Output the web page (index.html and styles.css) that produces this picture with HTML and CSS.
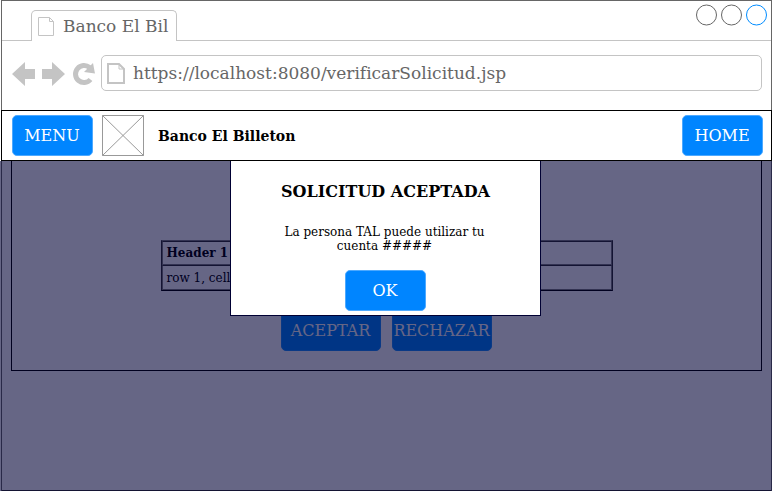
FILE: index.html
```html
<!DOCTYPE html>
<html lang="es">
<head>
<meta charset="utf-8">
<meta name="viewport" content="width=device-width, initial-scale=1">
<title>Banco El Billeton</title>
<link rel="stylesheet" href="styles.css">
</head>
<body>
<div class="window">
  <div class="tabs">
    <div class="tab">
      <svg class="tab-icon" width="16" height="19" viewBox="0 0 16 19" fill="none" stroke="#c4c4c4"><path d="M.5.5h11l4 4v14H.5z"/><path d="M11.500.5v4h4"/></svg>
      <span>Banco El Bil</span>
    </div>
    <svg class="controls" width="71" height="22" viewBox="0 0 71 22" fill="none" stroke="#666"><circle cx="10.500" cy="11" r="10"/><circle cx="35.500" cy="11" r="10"/><circle cx="60.500" cy="11" r="10" stroke="#008cff"/></svg>
  </div>
  <div class="toolbar">
    <svg class="nav-icons" width="84" height="26" viewBox="0 0 84 26"><path fill="#c4c4c4" d="M0 13 13 1v7h10v10H13v7zM53 13 40 1v7H30v10h10v7z"/><path d="M77.500 6.500A8.500 8.500 0 1 0 78.500 18.500" fill="none" stroke="#c4c4c4" stroke-width="5"/><path fill="#c4c4c4" d="M81 2l2 10.500-11-1.500z"/></svg>
    <div class="address">
      <svg width="18" height="21" viewBox="0 0 18 21" fill="none" stroke="#c4c4c4" stroke-width="2"><path d="M1 1h11l5 5v14H1z"/><path stroke-width="1" d="M12 1v5h5"/></svg>
      <input class="url" type="text" aria-label="Dirección" value="https://localhost:8080/verificarSolicitud.jsp">
    </div>
  </div>
  <header class="header">
    <button class="button" type="button">MENU</button>
    <svg class="logo" width="42" height="41" viewBox="0 0 42 41" fill="none" stroke="#999"><path d="M.5.5h41v40H.5zM.5.5l41 40M41.500.5l-41 40"/></svg>
    <h1 class="brand">Banco El Billeton</h1>
    <button class="button" type="button">HOME</button>
  </header>
  <main class="content">
    <section class="panel">
      <table class="grid">
        <tr><th>Header 1</th></tr>
        <tr><td>row 1, cell</td></tr>
      </table>
      <div class="actions">
        <button class="button wide" type="button">ACEPTAR</button>
        <button class="button wide" type="button">RECHAZAR</button>
      </div>
    </section>
    <div class="overlay">
      <div class="dialog" role="dialog" aria-labelledby="dialog-title">
        <h2 class="dialog-title" id="dialog-title">SOLICITUD ACEPTADA</h2>
        <p class="message">La persona TAL puede utilizar tu cuenta #####</p>
        <button class="button" type="button">OK</button>
      </div>
    </div>
  </main>
</div>
</body>
</html>
```
FILE: styles.css
```css
* { box-sizing: border-box; }

body {
  margin: 0;
  background: #fff;
  color: #000;
  font-family: "DejaVu Serif", serif;
}

.window {
  display: flex;
  flex-direction: column;
  min-height: calc(100vh - 1px);
  margin: 0 1px;
  border: 1px solid #666;
  border-bottom: 0;
}

.tabs {
  display: flex;
  justify-content: space-between;
  height: 40px;
  padding: 9px 4px 0 29px;
  border-bottom: 1px solid #c4c4c4;
}

.tab {
  display: flex;
  align-items: center;
  gap: 9px;
  height: 31px;
  padding: 0 8px 0 6px;
  border: 1px solid #c4c4c4;
  border-bottom: 0;
  border-radius: 5px 5px 0 0;
  background: #fff;
  color: #666;
  font-size: 17px;
}

.controls { margin-top: -6px; }

.toolbar {
  display: flex;
  align-items: center;
  gap: 5px;
  height: 69px;
  padding: 0 9px 5px 10px;
}

.nav-icons {
  flex: none;
  margin-top: 2px;
}

.address {
  display: flex;
  flex: 1;
  align-items: center;
  gap: 8px;
  height: 36px;
  padding: 0 5px;
  border: 1px solid #c4c4c4;
  border-radius: 5px;
}

.url {
  flex: 1;
  min-width: 0;
  padding: 0;
  border: 0;
  outline: 0;
  background: transparent;
  color: #666;
  font: 17px "DejaVu Serif", serif;
}

.header {
  display: flex;
  align-items: center;
  height: 51px;
  margin: 0 -1px;
  padding: 0 8px 0 10px;
  border: 1px solid #000;
}

.button {
  width: 81px;
  height: 41px;
  padding: 0 1px 0 0;
  border: 1px solid #4da9ff;
  border-radius: 5px;
  background: #0085ff;
  color: #fff;
  font: 16px "DejaVu Serif", serif;
}

.wide {
  width: 100px;
  border-color: #1a90ff;
}

.logo { margin: 0 14px 0 9px; }

.brand {
  flex: 1;
  margin: 0;
  font-size: 14px;
}

.content {
  position: relative;
  flex: 1;
  padding: 0 9px;
  border-bottom: 1px solid #333;
}

.panel {
  height: 210px;
  padding-top: 79px;
  border: 1px solid #000;
  border-top: 0;
}

.grid {
  width: 60%;
  min-width: 452px;
  margin: 0 auto;
  border: 1px solid;
  border-color: #808080 #333 #000 #333;
  border-spacing: 0;
  font-size: 12px;
}

.grid th,
.grid td {
  height: 25px;
  padding: 0 4px;
  border: 1px solid;
  border-color: #333 #808080 #808080 #808080;
  text-align: left;
}

.grid th { height: 24px; }

.actions {
  display: flex;
  justify-content: center;
  gap: 11px;
  margin-top: 19px;
}

.overlay {
  position: absolute;
  inset: 0 -1px -1px -2px;
  display: flex;
  align-items: flex-start;
  justify-content: center;
  background: rgba(0, 0, 51, 0.6);
}

.dialog {
  display: flex;
  flex-direction: column;
  align-items: center;
  width: 311px;
  height: 155px;
  margin-right: 1px;
  padding-top: 21px;
  border: 1px solid #003;
  border-top: 0;
  background: #fff;
}

.dialog-title {
  margin: 0;
  font-size: 16px;
  line-height: 20px;
}

.message {
  margin: 23px 46px 17px 44px;
  font-size: 12px;
  line-height: 14px;
  text-align: center;
}
```
